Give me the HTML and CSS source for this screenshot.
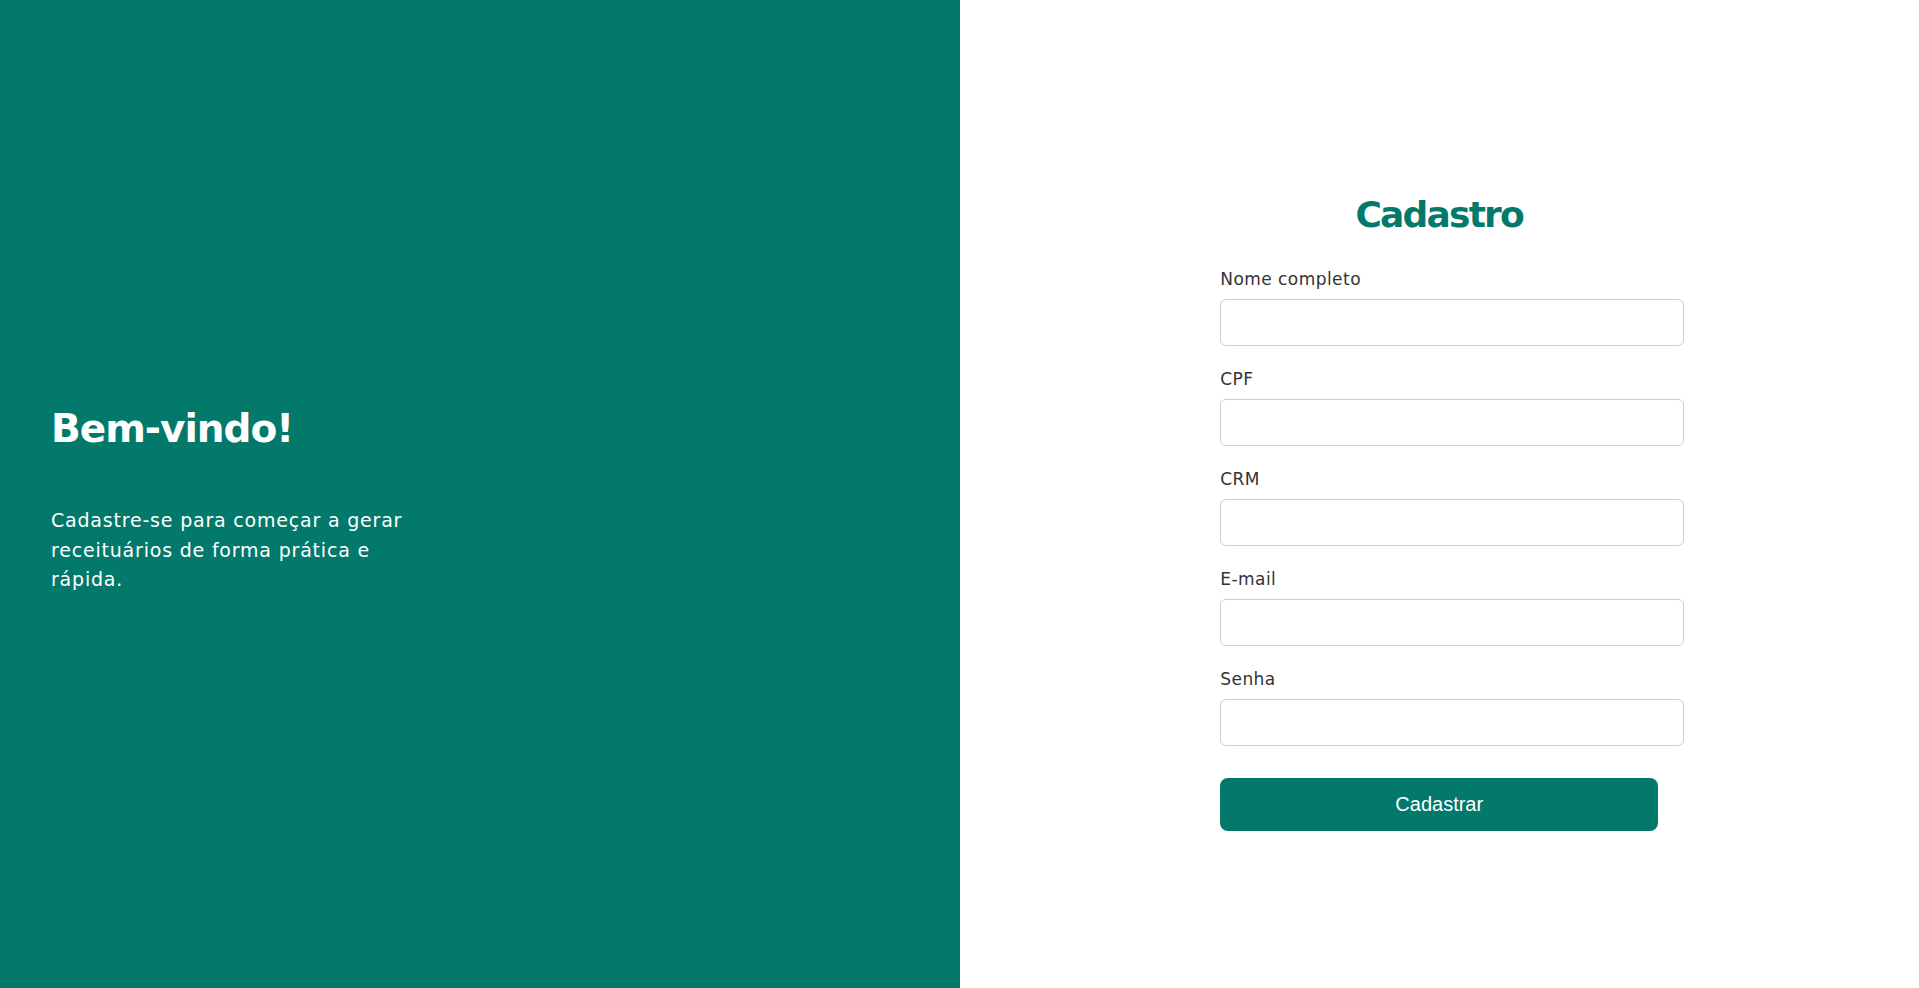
FILE: index.html
```html
<!DOCTYPE html>
<html lang="pt-BR">
<head>
<meta charset="utf-8">
<title>Cadastro</title>
<link rel="stylesheet" href="styles.css">
</head>
<body>
<div class="page">
  <section class="welcome">
    <h1 class="welcome-title">Bem-vindo!</h1>
    <p class="welcome-text">Cadastre-se para começar a gerar<br>receituários de forma prática e<br>rápida.</p>
  </section>
  <section class="signup">
    <form class="signup-form">
      <h2 class="signup-title">Cadastro</h2>
      <div class="field">
        <label class="field-label" for="nome">Nome completo</label>
        <input class="field-input" id="nome" type="text">
      </div>
      <div class="field">
        <label class="field-label" for="cpf">CPF</label>
        <input class="field-input" id="cpf" type="text">
      </div>
      <div class="field">
        <label class="field-label" for="crm">CRM</label>
        <input class="field-input" id="crm" type="text">
      </div>
      <div class="field">
        <label class="field-label" for="email">E-mail</label>
        <input class="field-input" id="email" type="email">
      </div>
      <div class="field">
        <label class="field-label" for="senha">Senha</label>
        <input class="field-input" id="senha" type="password">
      </div>
      <button class="submit" type="button">Cadastrar</button>
    </form>
  </section>
</div>
</body>
</html>
```

FILE: styles.css
```css
* { margin: 0; padding: 0; }

html, body {
  height: 100%;
}

body {
  font-family: "DejaVu Sans", Inter, sans-serif;
  background: #ffffff;
}

.page {
  display: flex;
  height: 100vh;
}

.welcome {
  flex: 0 0 50%;
  box-sizing: border-box;
  background: #02796b;
  color: #ffffff;
  display: flex;
  flex-direction: column;
  justify-content: center;
  padding: 12px 0 0 51px;
}

.welcome-title {
  font-size: 39px;
  font-weight: 700;
  line-height: 48px;
  letter-spacing: -1px;
  margin-bottom: 53px;
}

.welcome-text {
  font-size: 19px;
  font-weight: 400;
  line-height: 29.5px;
  letter-spacing: 0.8px;
}

.signup {
  flex: 0 0 50%;
  box-sizing: border-box;
  display: flex;
  flex-direction: column;
  justify-content: center;
  align-items: center;
}

.signup-form {
  width: 438px;
  display: flex;
  flex-direction: column;
}

.signup-title {
  margin-top: 35px;
  margin-bottom: 30px;
  text-align: center;
  color: #02796b;
  font-size: 36px;
  font-weight: 700;
  line-height: 44px;
  letter-spacing: -1.8px;
}

.field {
  display: flex;
  flex-direction: column;
  margin-bottom: 21px;
}

.field-label {
  font-size: 17px;
  line-height: 24px;
  letter-spacing: 0.45px;
  color: #333333;
  margin-bottom: 8px;
}

.field-input {
  box-sizing: content-box;
  width: 100%;
  height: 21px;
  padding: 12px;
  border: 1px solid #cccccc;
  border-radius: 6px;
  background: #ffffff;
  font-size: 16px;
  outline: none;
}

.submit {
  margin-top: 11px;
  height: 53px;
  border: none;
  border-radius: 8px;
  background: #02796b;
  color: #ffffff;
  font-family: "Liberation Sans", Arial, sans-serif;
  font-size: 20px;
  cursor: pointer;
}
```
